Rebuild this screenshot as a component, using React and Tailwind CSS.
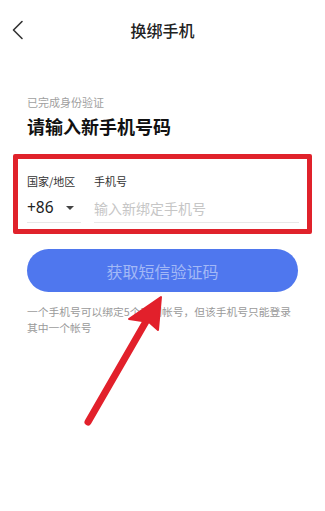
import React from 'react'

// back chevron
function BackIcon() {
  return (
    <svg width="14" height="20" viewBox="0 0 14 20" fill="none">
      <path d="M11 1.5 L2.5 10 L11 18.5" stroke="#333" strokeWidth="1.6" strokeLinecap="round" strokeLinejoin="round" />
    </svg>
  )
}

// red annotation arrow laid over the page
function Arrow() {
  return (
    <svg className="absolute inset-0 pointer-events-none" width="325" height="511" viewBox="0 0 325 511">
      <line x1="88" y1="422" x2="148" y2="318" stroke="#e2202b" strokeWidth="7" strokeLinecap="round" />
      <polygon points="161,297 158,330 149,322 129,319" fill="#e2202b" stroke="#e2202b" strokeWidth="2" strokeLinejoin="round" />
    </svg>
  )
}

export default function App() {
  return (
    <div className="relative w-[325px] h-[511px] bg-white overflow-hidden font-['Noto_Sans_CJK_SC','Noto_Sans',sans-serif]">
      {/* header */}
      <div className="h-[60px] grid grid-cols-[60px_1fr_60px] items-center">
        <div className="pl-[11px] flex items-center">
          <BackIcon />
        </div>
        <div className="text-center text-[16px] leading-6 text-[#222] font-medium">换绑手机</div>
        <div />
      </div>

      <div className="px-[27px] mt-[34px]">
        <div className="text-[11px] leading-4 text-[#a0a0a0]">已完成身份验证</div>
        <div className="mt-[4px] text-[18px] leading-6 font-bold text-[#111]">请输入新手机号码</div>
      </div>

      {/* phone field (with red highlight) */}
      <div className="mx-[13px] mt-[16px] border-[5px] border-[#e0222b] rounded-[2px] pl-[9px] pr-[8px] pt-[14px] pb-[6px] flex gap-[13px]">
        <div className="w-[54px]">
          <div className="text-[11px] leading-4 text-[#333]">国家/地区</div>
          <div className="mt-[5px] h-[29px] flex items-center justify-between border-b border-[#e8e8e8]">
            <span className="text-[15.5px] text-[#222] font-['Noto_Sans',sans-serif]">+86</span>
            <span className="mr-[7px] w-0 h-0 border-l-[4px] border-r-[4px] border-t-[4px] border-l-transparent border-r-transparent border-t-[#444]" />
          </div>
        </div>
        <div className="flex-1">
          <div className="text-[11px] leading-4 text-[#333]">手机号</div>
          <div className="mt-[5px] h-[29px] flex items-center border-b border-[#e8e8e8]">
            <span className="text-[14px] text-[#c6c6c6]">输入新绑定手机号</span>
          </div>
        </div>
      </div>

      <div className="px-[27px]">
        <button className="mt-[15px] w-full h-[43px] rounded-full bg-[#4f77ee] text-[16px] text-[#a3b9f6]">
          获取短信验证码
        </button>
        <p className="mt-[12px] text-[10.75px] leading-4 text-[#9a9a9a]">
          一个手机号可以绑定5个不同帐号，但该手机号只能登录其中一个帐号
        </p>
      </div>

      <Arrow />
    </div>
  )
}
